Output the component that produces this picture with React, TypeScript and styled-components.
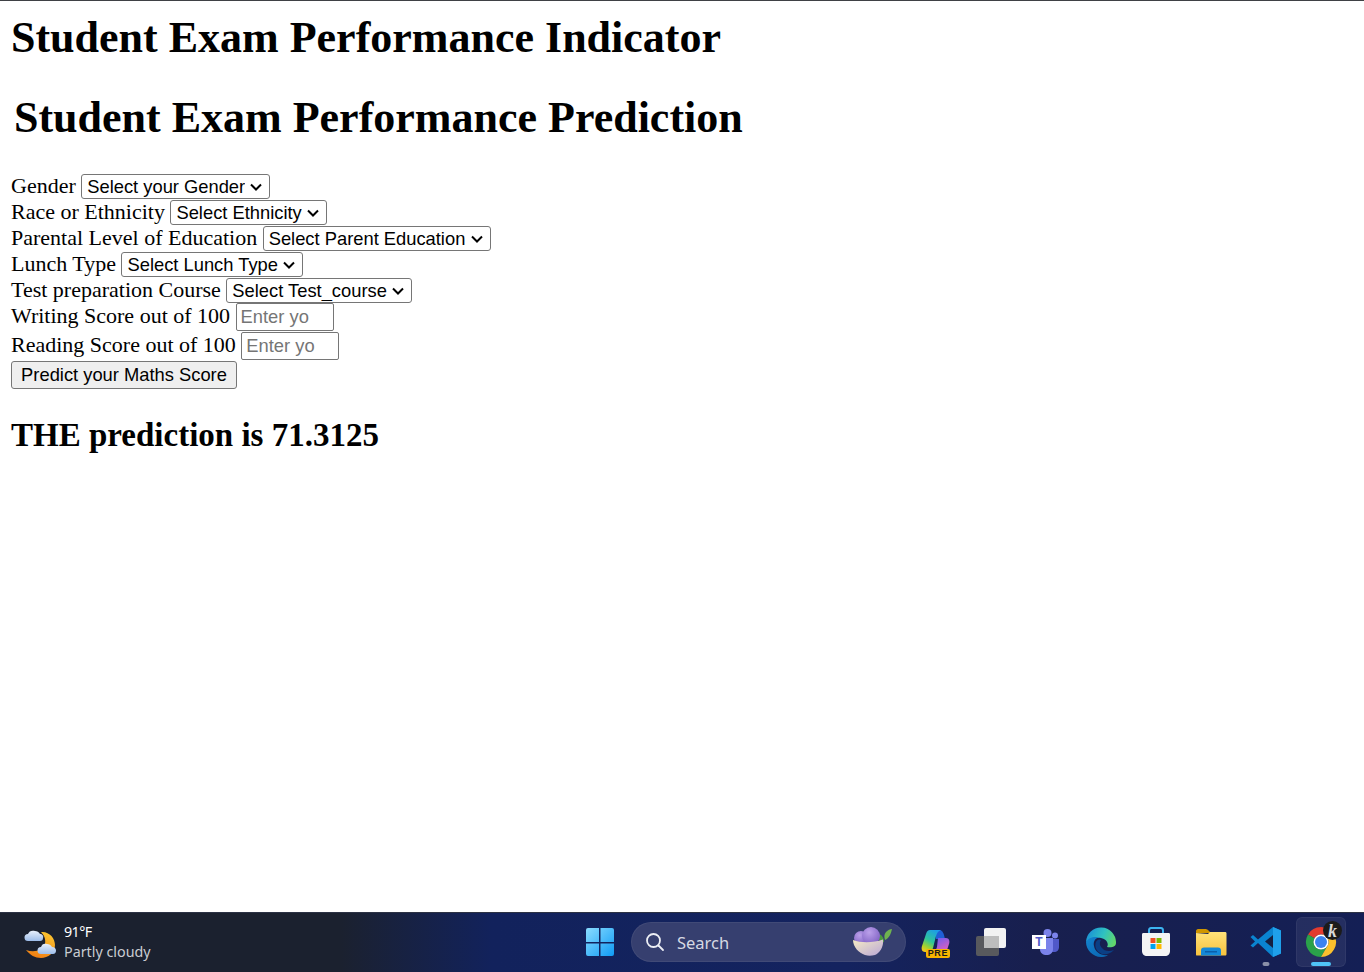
import React from 'react'
import styled, { createGlobalStyle } from 'styled-components'

const GlobalStyle = createGlobalStyle`
  html, body {
    margin: 0;
    padding: 0;
    background: #fff;
  }
  body {
    font-family: "Liberation Serif", "Times New Roman", serif;
    font-size: 22px;
    color: #000;
  }
`

const chevron = encodeURIComponent(
  '<svg xmlns="http://www.w3.org/2000/svg" width="14" height="8" viewBox="0 0 14 8"><path d="M2 1.500l5 5 5-5" fill="none" stroke="#000" stroke-width="2"/></svg>'
)

const Page = styled.div`
  display: flex;
  flex-direction: column;
  height: 972px;
  overflow: hidden;
`

const TopLine = styled.div`
  height: 1px;
  background: #3f4145;
`

const Main = styled.main`
  flex: 1;
  padding: 12px 11px 0;
`

const Title = styled.h1`
  margin: 0;
  font-size: 44px;
  line-height: 50px;
  font-weight: bold;
`

const Legend = styled(Title)`
  margin: 30px 0 0 3px;
`

const Form = styled.form`
  margin-top: 30px;
`

const Row = styled.div`
  height: ${p => p.$h ?? 26}px;
  line-height: 25px;
  white-space: nowrap;
`

const Picker = styled.select`
  appearance: none;
  font-family: "Liberation Sans", Arial, sans-serif;
  font-size: 18.33px;
  height: 25px;
  padding: 0 24px 0 5px;
  background: #fff url("data:image/svg+xml,${chevron}") no-repeat right 6px center;
  color: #000;
  border: 1px solid #767676;
  border-radius: 3px;
`

const ScoreInput = styled.input`
  font-family: "Liberation Sans", Arial, sans-serif;
  font-size: 18.33px;
  width: 98px;
  height: 28px;
  box-sizing: border-box;
  padding: 1px 4px;
  background: #fff;
  border: 1px solid #767676;
  border-radius: 2px;
  &::placeholder {
    color: #757575;
    opacity: 1;
  }
`

const Submit = styled.button`
  font-family: "Liberation Sans", Arial, sans-serif;
  font-size: 18.33px;
  height: 28px;
  width: 226px;
  padding: 0;
  color: #000;
  background: #efefef;
  border: 1px solid #767676;
  border-radius: 3px;
  vertical-align: top;
`

const Result = styled.h2`
  margin: 27px 0 0;
  font-size: 33px;
  line-height: 38px;
  font-weight: bold;
`

const Taskbar = styled.footer`
  display: flex;
  align-items: center;
  height: 60px;
  flex: none;
  box-shadow: inset 0 1px 0 #2c3244;
  background: linear-gradient(90deg, #1b212f 0%, #1b212f 25%, #12225c 36%, #14235f 62%, #181f4e 76%, #141f55 100%);
  font-family: "Noto Sans", "Open Sans", sans-serif;
`

const Weather = styled.div`
  display: flex;
  align-items: center;
  gap: 8px;
  width: 551px;
  margin-left: 24px;
  flex: none;
`

const WeatherText = styled.div`
  display: flex;
  flex-direction: column;
  font-size: 14.3px;
  line-height: 20px;
`

const Temp = styled.span`
  color: #fff;
  letter-spacing: -0.6px;
`

const Condition = styled.span`
  color: #c9ccd2;
`

const Slot = styled.div`
  position: relative;
  display: flex;
  align-items: center;
  justify-content: center;
  flex: none;
  width: 50px;
  height: 50px;
  box-sizing: border-box;
  margin-right: 5px;
  border-radius: 6px;
  background: ${p => (p.$active ? 'rgba(255, 255, 255, 0.07)' : 'transparent')};
  box-shadow: ${p => (p.$active ? 'inset 0 0 0 1px rgba(255, 255, 255, 0.05)' : 'none')};
`

const Indicator = styled.span`
  position: absolute;
  left: 50%;
  bottom: 1px;
  transform: translateX(-50%);
  width: ${p => (p.$on ? 20 : 7)}px;
  height: 4px;
  border-radius: 2px;
  background: ${p => (p.$on ? '#4fc3f7' : '#8a90a8')};
`

const Search = styled.div`
  display: flex;
  align-items: center;
  flex: none;
  width: 275px;
  height: 40px;
  box-sizing: border-box;
  margin: 0 5px 0 1px;
  padding: 0 14px;
  border-radius: 20px;
  background: #363f6f;
  box-shadow: inset 0 0 0 1px rgba(255, 255, 255, 0.06);
  color: #d5d8e2;
  font-size: 16.5px;
`

const SearchLabel = styled.span`
  flex: 1;
  margin-left: 12px;
`

const Badge = styled.span`
  position: absolute;
  right: 11px;
  bottom: 9px;
  padding: 0 2px;
  background: #f7b500;
  border-radius: 2px;
  color: #1a1a1a;
  font: bold 9px/9px "Liberation Sans", Arial, sans-serif;
  letter-spacing: 0.6px;
`

const ChromeSlot = styled(Slot)`
  margin-right: 0;
`

const MoonIcon = () => (
  <svg width="32" height="34" viewBox="0 0 32 34">
    <defs>
      <linearGradient id="moon" x1="0.7" y1="0" x2="0.3" y2="1">
        <stop offset="0" stopColor="#fbc531" />
        <stop offset="1" stopColor="#f07d12" />
      </linearGradient>
      <linearGradient id="cloud" x1="0" y1="0" x2="0" y2="1">
        <stop offset="0" stopColor="#e8f0fc" />
        <stop offset="1" stopColor="#9dbdea" />
      </linearGradient>
    </defs>
    <path d="M17 7c8-1 14 6 14 13 0 8-7 13-14 13-6 0-11-3-15-8 9 3 17 0 19-6 1-5-1-9-4-12z" fill="url(#moon)" />
    <path d="M4 16a3.500 3.500 0 0 1 0-7c1-3 4-4 7-3 2 0 4 1 5 3 2 0 4 2 3 4 0 2-1 3-3 3z" fill="url(#cloud)" />
    <path d="M17 29a3.500 3.500 0 0 1 0-7c1-3 3-4 6-3 2 0 4 1 5 3 2 0 4 1 4 3.500 0 2-1 3.500-3 3.500z" fill="url(#cloud)" />
  </svg>
)

const WindowsIcon = () => (
  <svg width="30" height="30" viewBox="0 0 30 30">
    <defs>
      <linearGradient id="win" x1="0" y1="0" x2="1" y2="1">
        <stop offset="0" stopColor="#8adcff" />
        <stop offset="1" stopColor="#0f9bf5" />
      </linearGradient>
    </defs>
    <path d="M1 3a2 2 0 0 1 2-2h11v14H1zM15.500 1H27a2 2 0 0 1 2 2v12H15.500zM1 16.500h13V29H3a2 2 0 0 1-2-2zM15.500 16.500H29V27a2 2 0 0 1-2 2H15.500z" fill="url(#win)" />
  </svg>
)

const SearchIcon = () => (
  <svg width="20" height="20" viewBox="0 0 20 20" fill="none" stroke="#eceef4" strokeWidth="1.8" strokeLinecap="round">
    <circle cx="8.500" cy="8.500" r="6.500" />
    <path d="M13.500 13.500L18 18" />
  </svg>
)

const BowlIcon = () => (
  <svg width="40" height="30" viewBox="0 0 40 30">
    <defs>
      <linearGradient id="bowl" x1="0" y1="0" x2="1" y2="1">
        <stop offset="0" stopColor="#f6ecc4" />
        <stop offset="1" stopColor="#b9a6d6" />
      </linearGradient>
      <radialGradient id="scoop" cx="0.4" cy="0.3" r="0.8">
        <stop offset="0" stopColor="#bba0ea" />
        <stop offset="1" stopColor="#7a5cc0" />
      </radialGradient>
    </defs>
    <path d="M34 5c2-2 4-3 6-3-1 5-3 9-7 11-1-3-1-6 1-8z" fill="#6fb34f" />
    <path d="M27 7c3 1 5 4 5 8-3 0-5-1-6-3-1-2 0-4 1-5z" fill="#4b9a3f" />
    <circle cx="9" cy="11" r="7" fill="url(#scoop)" />
    <circle cx="19" cy="9" r="9" fill="url(#scoop)" />
    <path d="M1 13c8 3 20 3 30-.5 1 8-4 14-8 15.500-4 1-7 1-10 0C7 26 1 20 1 13z" fill="url(#bowl)" />
  </svg>
)

const CopilotIcon = () => (
  <svg width="30" height="26" viewBox="0 0 30 26">
    <defs>
      <linearGradient id="copA" x1="0.7" y1="0" x2="0.2" y2="1">
        <stop offset="0" stopColor="#1c9ce8" />
        <stop offset="0.5" stopColor="#2fc59a" />
        <stop offset="0.8" stopColor="#a5d32d" />
        <stop offset="1" stopColor="#f6c91b" />
      </linearGradient>
      <linearGradient id="copB" x1="0.2" y1="0" x2="0.8" y2="1">
        <stop offset="0" stopColor="#6a5cf0" />
        <stop offset="1" stopColor="#ee62b8" />
      </linearGradient>
    </defs>
    <path d="M15 1h3c3 0 4 2 5 5l1 4h-9z" fill="#1f5fd6" />
    <path d="M17 9h8c3 0 4 3 3 6l-2 6c-1 2-2 3-5 3h-9c2-1 3-3 4-6z" fill="url(#copB)" />
    <path d="M9 1h11c-3 1-4 3-5 6l-3 12c-1 3-2 4-5 4H4c-3 0-4-3-3-6l4-12C6 2 7 1 9 1z" fill="url(#copA)" />
  </svg>
)

const TaskViewIcon = () => (
  <svg width="32" height="30" viewBox="0 0 32 30">
    <rect x="9" y="1" width="22" height="20" rx="2" fill="#f2f2f2" />
    <rect x="1" y="9" width="23" height="20" rx="2" fill="#5e5e5e" fillOpacity="0.92" />
    <rect x="9" y="9" width="15" height="12" fill="#bdbdbd" />
  </svg>
)

const TeamsIcon = () => (
  <svg width="28" height="28" viewBox="0 0 28 28">
    <circle cx="23" cy="7.500" r="3" fill="#7b83eb" />
    <circle cx="15.500" cy="5" r="4" fill="#7b83eb" />
    <path d="M19 11h8v8c0 3-2 5-5 5-1 0-2 0-3-1z" fill="#5059c9" />
    <path d="M8 10h13v11c0 4-3 6-6.500 6S8 25 8 21z" fill="#7b83eb" />
    <rect x="0" y="7" width="14" height="14" fill="#fff" />
    <text x="7" y="18" textAnchor="middle" fontFamily="Liberation Sans, sans-serif" fontWeight="bold" fontSize="12" fill="#5059c9">T</text>
  </svg>
)

const EdgeIcon = () => (
  <svg width="30" height="30" viewBox="0 0 30 30">
    <defs>
      <linearGradient id="edgeA" x1="0" y1="0.3" x2="1" y2="0.6">
        <stop offset="0" stopColor="#1a8fd8" />
        <stop offset="0.55" stopColor="#2fc2c0" />
        <stop offset="1" stopColor="#62d66a" />
      </linearGradient>
      <linearGradient id="edgeB" x1="0" y1="0" x2="1" y2="1">
        <stop offset="0" stopColor="#1384d0" />
        <stop offset="1" stopColor="#0a62ad" />
      </linearGradient>
    </defs>
    <path d="M0 15A15 15 0 0 1 30 16C30 20 25 21 21 20C23 17 21 12 15 11C8 10 2 14 0 15Z" fill="url(#edgeA)" />
    <path d="M0 15C2 11 8 9 13 10.500C9 11 7 15 8 19C9 25 15 29 22 28C19 30 17 30 15 30C7 30 0 23 0 15Z" fill="url(#edgeB)" />
    <path d="M10 15C8 20 11 25 16 27C20 28 24 27 28 23C23 25 18 24 16 21C14 19 13 16 15 13C13 12 11 13 10 15Z" fill="#0b3f85" />
  </svg>
)

const StoreIcon = () => (
  <svg width="30" height="30" viewBox="0 0 30 30">
    <path d="M8 8V3.500C8 2 8.500 1 10 1h10c1.500 0 2 1 2 2.500V8" fill="none" stroke="#3cb4f0" strokeWidth="2" />
    <path d="M1 7.500C1 6.500 1.500 6 2.500 6h25c1 0 1.500.5 1.500 1.500V24c0 3-2 5-5 5H6c-3 0-5-2-5-5z" fill="#f4f4f4" />
    <rect x="9.500" y="11" width="5" height="5" fill="#f25022" />
    <rect x="15.500" y="11" width="5" height="5" fill="#7fba00" />
    <rect x="9.500" y="17" width="5" height="5" fill="#00a4ef" />
    <rect x="15.500" y="17" width="5" height="5" fill="#ffb900" />
  </svg>
)

const ExplorerIcon = () => (
  <svg width="32" height="28" viewBox="0 0 32 28">
    <defs>
      <linearGradient id="folder" x1="0" y1="0" x2="0" y2="1">
        <stop offset="0" stopColor="#ffe27a" />
        <stop offset="1" stopColor="#f7c23e" />
      </linearGradient>
    </defs>
    <path d="M1 3c0-1 1-2 2-2h7c1 0 2 0 3 1l3 3H1z" fill="#cf9500" />
    <path d="M1 5l12 1 2-2h15c1 0 1.500.5 1.500 1.500V26c0 1-.5 1.500-1.500 1.500H2c-1 0-1-.5-1-1.500z" fill="url(#folder)" />
    <path d="M6 27.500v-5c0-2 1-3 3-3h14c2 0 3 1 3 3v5z" fill="#1489d8" />
    <rect x="10" y="23" width="12" height="1.500" fill="#0b5ea8" />
  </svg>
)

const VSCodeIcon = () => (
  <svg width="32" height="32" viewBox="0 0 32 32">
    <path d="M23 1l8 3.500v23L23 31 8 17l-5 4.500-2.500-2L5 15.500.5 11 3 9l5 4.500z" fill="#0a84d0" />
    <path d="M23 1l8 3.500v23L23 31z" fill="#1fa0ea" />
    <path d="M23 9l-8 6.500 8 6.500z" fill="#16203f" />
  </svg>
)

const ChromeIcon = () => (
  <svg width="46" height="46" viewBox="0 0 46 46">
    <path d="M10 15.500A15 15 0 0 1 36 15.500H23A7.500 7.500 0 0 0 16.500 19.250Z" fill="#e33b2e" />
    <path d="M10 15.500A15 15 0 0 0 23 38L29.500 26.750A7.500 7.500 0 0 1 16.500 19.250Z" fill="#2aa14a" />
    <path d="M36 15.500A15 15 0 0 1 23 38L29.500 26.750A7.500 7.500 0 0 0 23 15.500Z" fill="#fbc02d" />
    <circle cx="23" cy="23" r="7.500" fill="#fff" />
    <circle cx="23" cy="23" r="6" fill="#3b82f0" />
    <circle cx="34.500" cy="11.500" r="9.500" fill="#1b1b1b" />
    <text x="34.500" y="17.500" textAnchor="middle" fontFamily="Liberation Serif, serif" fontStyle="italic" fontWeight="bold" fontSize="18" fill="#d8d8d8">k</text>
  </svg>
)

const App = () => (
  <Page>
    <GlobalStyle />
    <TopLine />
    <Main>
      <Title>Student Exam Performance Indicator</Title>
      <Legend>Student Exam Performance Prediction</Legend>
      <Form onSubmit={e => e.preventDefault()}>
        <Row>
          Gender{' '}
          <Picker defaultValue="">
            <option value="">Select your Gender</option>
          </Picker>
        </Row>
        <Row>
          Race or Ethnicity{' '}
          <Picker defaultValue="">
            <option value="">Select Ethnicity</option>
          </Picker>
        </Row>
        <Row>
          Parental Level of Education{' '}
          <Picker defaultValue="">
            <option value="">Select Parent Education</option>
          </Picker>
        </Row>
        <Row>
          Lunch Type{' '}
          <Picker defaultValue="">
            <option value="">Select Lunch Type</option>
          </Picker>
        </Row>
        <Row>
          Test preparation Course{' '}
          <Picker defaultValue="">
            <option value="">Select Test_course</option>
          </Picker>
        </Row>
        <Row $h={29}>
          Writing Score out of 100 <ScoreInput placeholder="Enter yo" />
        </Row>
        <Row $h={29}>
          Reading Score out of 100 <ScoreInput placeholder="Enter yo" />
        </Row>
        <Row $h={28}>
          <Submit>Predict your Maths Score</Submit>
        </Row>
      </Form>
      <Result>THE prediction is 71.3125</Result>
    </Main>
    <Taskbar>
      <Weather>
        <MoonIcon />
        <WeatherText>
          <Temp>91°F</Temp>
          <Condition>Partly cloudy</Condition>
        </WeatherText>
      </Weather>
      <Slot>
        <WindowsIcon />
      </Slot>
      <Search>
        <SearchIcon />
        <SearchLabel>Search</SearchLabel>
        <BowlIcon />
      </Search>
      <Slot>
        <CopilotIcon />
        <Badge>PRE</Badge>
      </Slot>
      <Slot>
        <TaskViewIcon />
      </Slot>
      <Slot>
        <TeamsIcon />
      </Slot>
      <Slot>
        <EdgeIcon />
      </Slot>
      <Slot>
        <StoreIcon />
      </Slot>
      <Slot>
        <ExplorerIcon />
      </Slot>
      <Slot>
        <VSCodeIcon />
        <Indicator />
      </Slot>
      <ChromeSlot $active>
        <ChromeIcon />
        <Indicator $on />
      </ChromeSlot>
    </Taskbar>
  </Page>
)

export default App
